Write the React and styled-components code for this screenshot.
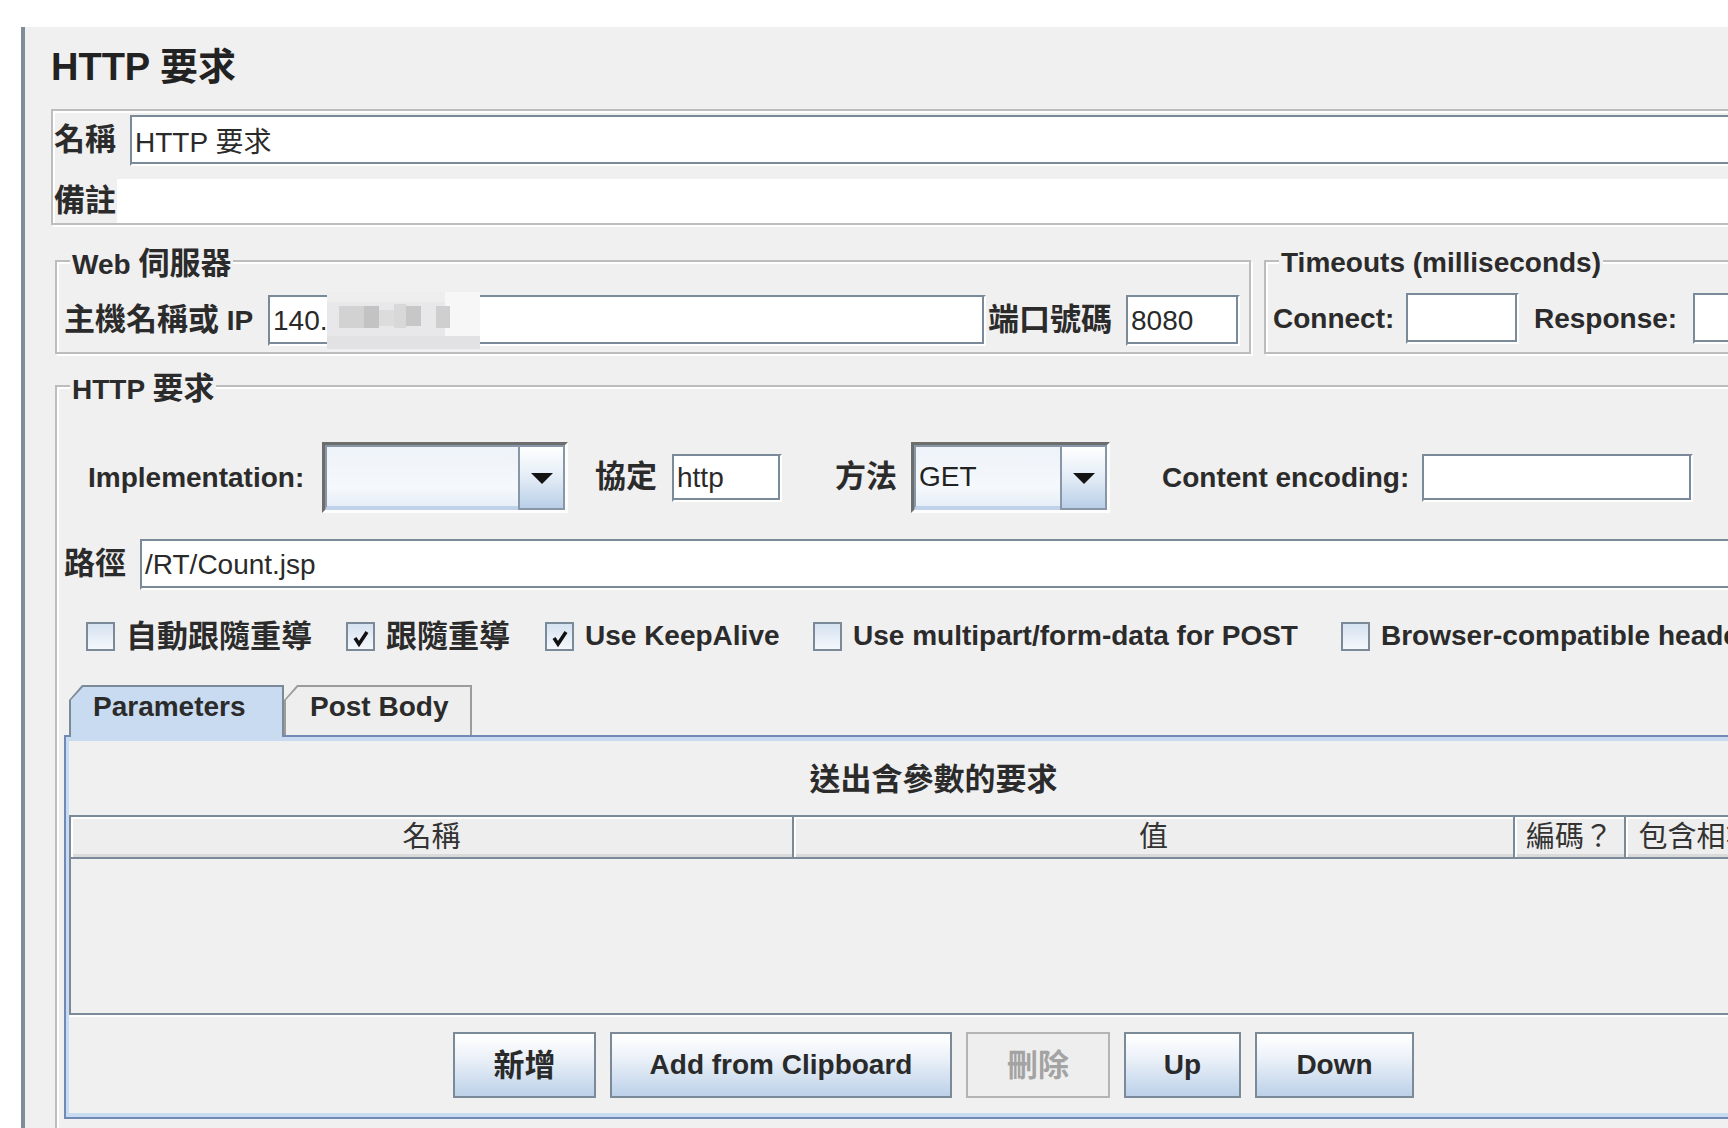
import React from 'react'
import styled, { createGlobalStyle } from 'styled-components'

const FONT = `"Liberation Sans", "Noto Sans CJK TC", sans-serif`

const GlobalStyle = createGlobalStyle`
  html, body { margin: 0; padding: 0; background: #ffffff; }
  body { font-family: ${FONT}; color: #2e2e2e; overflow: hidden; }
  * { box-sizing: border-box; }
`

const Page = styled.div`
  width: 1728px;
  height: 1128px;
  overflow: hidden;
  padding: 27px 0 0 21px;
`

const Frame = styled.div`
  width: 1820px;
  height: 1101px;
  overflow: hidden;
  border-left: 4px solid #7f8d9b;
  background: #f0f0f0;
  padding: 17px 0 0 26px;
  display: flex;
  flex-direction: column;
  align-items: flex-start;
`

const Title = styled.h1`
  margin: 0;
  font-size: 38px;
  line-height: 46px;
  font-weight: bold;
  color: #222;
`

const Zh = styled.span`
  font-size: ${p => p.$size || 31}px;
  line-height: 1;
`

const NameBox = styled.div`
  margin-top: 19px;
  width: 1764px;
  border: 2px solid #bdbdbd;
  box-shadow: inset 2px 2px 0 #fff, 2px 2px 0 #fff;
  padding: 3px 0 0 1px;
  display: flex;
  flex-direction: column;
`

const BoxRow = styled.div`
  display: flex;
  align-items: center;
  height: ${p => p.$h}px;
  margin-top: ${p => p.$mt || 0}px;
`

const CommentArea = styled.div`
  flex: 1;
  align-self: stretch;
  background: #fff;
`

const Label = styled.span`
  flex: none;
  width: ${p => p.$w}px;
  margin-left: ${p => p.$ml || 0}px;
  font-size: 28px;
  font-weight: bold;
  color: #2b2b2b;
  white-space: nowrap;
`

const Field = styled.div`
  position: relative;
  flex: ${p => (p.$w ? 'none' : '1')};
  width: ${p => (p.$w ? `${p.$w}px` : 'auto')};
  height: ${p => p.$h || 51}px;
  background: #fff;
  border: 2px solid;
  border-color: #7a8a99 #ffffff #ffffff #7a8a99;
  box-shadow: inset -2px -2px 0 #7a8a99;
  display: flex;
  align-items: center;
  padding-left: 3px;
  font-size: 28px;
  color: #2a2a2a;
  white-space: nowrap;
`

const ServerRow = styled.div`
  display: flex;
  gap: 13px;
  margin: 35px 0 0 4px;
`

const Group = styled.section`
  flex: none;
  width: ${p => p.$w}px;
  margin: ${p => p.$mt || 0}px 0 0 ${p => p.$ml || 0}px;
  border: 2px solid #bdbdbd;
  box-shadow: inset 2px 2px 0 #fff, 2px 2px 0 #fff;
  padding: 0 7px ${p => p.$pb || 0}px 7px;
  display: flex;
  flex-direction: column;
  align-items: flex-start;
`

const GroupTitle = styled.div`
  margin: -14px 0 0 6px;
  padding: 0 2px;
  background: #f0f0f0;
  font-size: 28px;
  font-weight: bold;
  line-height: 30px;
  color: #2b2b2b;
  white-space: nowrap;
`

const FormRow = styled.div`
  align-self: stretch;
  display: flex;
  align-items: center;
  height: ${p => p.$h || 51}px;
  margin: ${p => p.$mt || 0}px 0 0 ${p => p.$ml || 0}px;
`

const MosaicSvg = styled.svg`
  position: absolute;
  left: 57px;
  top: -5px;
`

const Combo = styled.div`
  flex: none;
  width: ${p => p.$w}px;
  height: 71px;
  display: flex;
  border: 3px solid;
  border-color: #6d6d6d #fdfdfd #fdfdfd #6d6d6d;
`

const ComboValue = styled.div`
  flex: 1;
  display: flex;
  align-items: center;
  padding-left: 3px;
  background: linear-gradient(#eef3f9, #f5f8fc 70%, #e6eef7);
  border: 2px solid #8797a8;
  border-right: none;
  border-bottom: 4px solid #bfd2e9;
  font-size: 28px;
  color: #222;
`

const ComboArrow = styled.div`
  flex: none;
  width: 47px;
  display: flex;
  align-items: center;
  justify-content: center;
  background: linear-gradient(#ffffff, #e3ecf6 50%, #b9cfe8);
  border: 2px solid #8797a8;
`

const Caret = styled.span`
  width: 0;
  height: 0;
  border-left: 11px solid transparent;
  border-right: 11px solid transparent;
  border-top: 11px solid #141414;
  margin-top: 2px;
`

const CheckRow = styled.div`
  display: flex;
  align-items: center;
  height: 34px;
  margin: 29px 0 0 22px;
`

const CheckItem = styled.div`
  flex: none;
  width: ${p => (p.$w ? `${p.$w}px` : 'auto')};
  display: flex;
  align-items: center;
  font-size: 28px;
  font-weight: bold;
  color: #2b2b2b;
  white-space: nowrap;
`

const Box = styled.span`
  flex: none;
  width: 29px;
  height: 29px;
  margin-right: 11px;
  border: 2px solid #7a8a99;
  background: linear-gradient(#d6e2f0, #f4f8fc);
  display: flex;
`

const TabStrip = styled.div`
  display: flex;
  align-items: flex-end;
  width: 1739px;
  height: 52px;
  margin-top: 32px;
`

const TabLine = styled.div`
  flex: ${p => (p.$w ? 'none' : '1')};
  width: ${p => (p.$w ? `${p.$w}px` : 'auto')};
  height: 2px;
  background: #7089b6;
`

const Tab = styled.div`
  flex: none;
  width: ${p => p.$w}px;
  height: 52px;
  display: flex;
  background: ${p => (p.$active ? '#7a8a99' : '#9c9c9c')};
  box-shadow: ${p => (p.$active ? 'none' : 'inset 0 -2px 0 #7089b6')};
  clip-path: polygon(0 15px, 13px 0, 100% 0, 100% 100%, 0 100%);
`

const TabFace = styled.div`
  flex: 1;
  margin: 2px 2px ${p => (p.$active ? 0 : 2)}px 2px;
  background: ${p => (p.$active ? '#c9dbf0' : '#eeeeee')};
  clip-path: polygon(0 13px, 12px 0, 100% 0, 100% 100%, 0 100%);
  padding: 5px 0 0 ${p => p.$pl}px;
  font-size: 28px;
  font-weight: bold;
  line-height: 30px;
  color: #2b2b2b;
`

const TabPanel = styled.div`
  width: 1739px;
  border: 2px solid #7089b6;
  border-top: none;
  box-shadow: inset 3px 0 0 #c9dbf0, inset -3px 0 0 #c9dbf0, inset 0 4px 0 #c9dbf0, inset 0 -4px 0 #c9dbf0;
  padding: 4px 3px;
  display: flex;
  flex-direction: column;
`

const PanelHeading = styled.div`
  margin-top: 22px;
  text-align: center;
  font-size: 31px;
  line-height: 34px;
  font-weight: bold;
  color: #2b2b2b;
`

const Table = styled.div`
  margin-top: 18px;
  border: 2px solid #7a8a99;
  border-right: none;
  box-shadow: 0 2px 0 #fff;
`

const HeadRow = styled.div`
  display: grid;
  grid-template-columns: 723px 721px 111px 1fr;
  border-bottom: 2px solid #7a8a99;
`

const HeadCell = styled.div`
  height: 40px;
  display: flex;
  align-items: center;
  justify-content: center;
  border-right: 2px solid #7a8a99;
  box-shadow: inset 2px 2px 0 #fff, inset 0 -3px 0 #dadada;
  background: #eeeeee;
  font-size: 29px;
  line-height: 1;
  color: #333;
  white-space: nowrap;
  overflow: hidden;
`

const TableBody = styled.div`
  height: 154px;
  background: #f0f0f0;
`

const ButtonRow = styled.div`
  display: flex;
  justify-content: center;
  gap: 14px;
  margin: 17px 0 15px;
`

const Button = styled.div`
  width: ${p => p.$w}px;
  height: 66px;
  display: flex;
  align-items: center;
  justify-content: center;
  border: 2px solid ${p => (p.$disabled ? '#b4b4b4' : '#7a8a99')};
  background: ${p => (p.$disabled ? '#eeeeee' : 'linear-gradient(#ffffff 0%, #eef3f9 35%, #bcd1e9 100%)')};
  color: ${p => (p.$disabled ? '#a3a3a3' : '#2a2a2a')};
  font-size: 28px;
  font-weight: bold;
`

function Mosaic() {
  return (
    <MosaicSvg width="153" height="57" viewBox="0 0 153 57">
      <rect width="153" height="57" fill="#e8e8ea" />
      <rect x="0" y="0" width="153" height="10" fill="#eeeeef" />
      <rect x="118" y="0" width="35" height="44" fill="#f7f7f8" />
      <rect x="0" y="44" width="153" height="13" fill="#e2e2e4" />
      <rect x="12" y="14" width="25" height="22" fill="#d2d2d2" />
      <rect x="37" y="14" width="15" height="22" fill="#c3c3c3" />
      <rect x="52" y="18" width="15" height="16" fill="#dcdcdd" />
      <rect x="67" y="12" width="12" height="24" fill="#d8d8d9" />
      <rect x="79" y="14" width="15" height="20" fill="#c7c7c7" />
      <rect x="109" y="14" width="14" height="22" fill="#cfcfd0" />
    </MosaicSvg>
  )
}

function CheckMark() {
  return (
    <svg width="25" height="25" viewBox="0 0 25 25">
      <path d="M7 14 L11 20 L19 8" fill="none" stroke="#111" strokeWidth="3.5" />
    </svg>
  )
}

const checks = [
  { w: 260, on: false, zh: '自動跟隨重導' },
  { w: 199, on: true, zh: '跟隨重導' },
  { w: 268, on: true, text: 'Use KeepAlive' },
  { w: 528, on: false, text: 'Use multipart/form-data for POST' },
  { on: false, text: 'Browser-compatible headers' },
]

const buttons = [
  { w: 143, zh: '新增' },
  { w: 342, text: 'Add from Clipboard' },
  { w: 144, zh: '刪除', disabled: true },
  { w: 117, text: 'Up' },
  { w: 159, text: 'Down' },
]

export default function App() {
  return (
    <>
      <GlobalStyle />
      <Page>
        <Frame>
          <Title>HTTP 要求</Title>

          <NameBox>
            <BoxRow $h={52}>
              <Label $w={76}><Zh>名稱</Zh></Label>
              <Field>HTTP 要求</Field>
            </BoxRow>
            <BoxRow $h={44} $mt={13}>
              <Label $w={63}><Zh>備註</Zh></Label>
              <CommentArea />
            </BoxRow>
          </NameBox>

          <ServerRow>
            <Group $w={1196} $pb={6}>
              <GroupTitle>Web <Zh>伺服器</Zh></GroupTitle>
              <FormRow $mt={15}>
                <Label $w={204}><Zh>主機名稱或</Zh> IP</Label>
                <Field $w={718}>140.<Mosaic /></Field>
                <Label $w={138} $ml={2}><Zh>端口號碼</Zh></Label>
                <Field $w={114}>8080</Field>
              </FormRow>
            </Group>
            <Group $w={548} $pb={6}>
              <GroupTitle>Timeouts (milliseconds)</GroupTitle>
              <FormRow $mt={15}>
                <Label $w={133}>Connect:</Label>
                <Field $w={113} />
                <Label $w={159} $ml={15}>Response:</Label>
                <Field $w={113} />
              </FormRow>
            </Group>
          </ServerRow>

          <Group $w={1757} $mt={31} $ml={4} $pb={60}>
            <GroupTitle>HTTP <Zh>要求</Zh></GroupTitle>

            <FormRow $mt={37} $h={71} $ml={24}>
              <Label $w={234}>Implementation:</Label>
              <Combo $w={246}>
                <ComboValue />
                <ComboArrow><Caret /></ComboArrow>
              </Combo>
              <Label $w={77} $ml={27}><Zh>協定</Zh></Label>
              <Field $w={110} $h={48}>http</Field>
              <Label $w={76} $ml={53}><Zh>方法</Zh></Label>
              <Combo $w={199}>
                <ComboValue>GET</ComboValue>
                <ComboArrow><Caret /></ComboArrow>
              </Combo>
              <Label $w={260} $ml={52}>Content encoding:</Label>
              <Field $w={271} $h={48} />
            </FormRow>

            <FormRow $mt={26}>
              <Label $w={76}><Zh>路徑</Zh></Label>
              <Field>/RT/Count.jsp</Field>
            </FormRow>

            <CheckRow>
              {checks.map((c, i) => (
                <CheckItem key={i} $w={c.w}>
                  <Box>{c.on && <CheckMark />}</Box>
                  {c.zh ? <Zh>{c.zh}</Zh> : c.text}
                </CheckItem>
              ))}
            </CheckRow>

            <TabStrip>
              <TabLine $w={5} />
              <Tab $w={215} $active>
                <TabFace $active $pl={22}>Parameters</TabFace>
              </Tab>
              <Tab $w={188}>
                <TabFace $pl={24}>Post Body</TabFace>
              </Tab>
              <TabLine />
            </TabStrip>

            <TabPanel>
              <PanelHeading>送出含參數的要求</PanelHeading>
              <Table>
                <HeadRow>
                  <HeadCell>名稱</HeadCell>
                  <HeadCell>值</HeadCell>
                  <HeadCell>編碼？</HeadCell>
                  <HeadCell>包含相等？</HeadCell>
                </HeadRow>
                <TableBody />
              </Table>
              <ButtonRow>
                {buttons.map((b, i) => (
                  <Button key={i} $w={b.w} $disabled={b.disabled}>
                    {b.zh ? <Zh>{b.zh}</Zh> : b.text}
                  </Button>
                ))}
              </ButtonRow>
            </TabPanel>
          </Group>
        </Frame>
      </Page>
    </>
  )
}
